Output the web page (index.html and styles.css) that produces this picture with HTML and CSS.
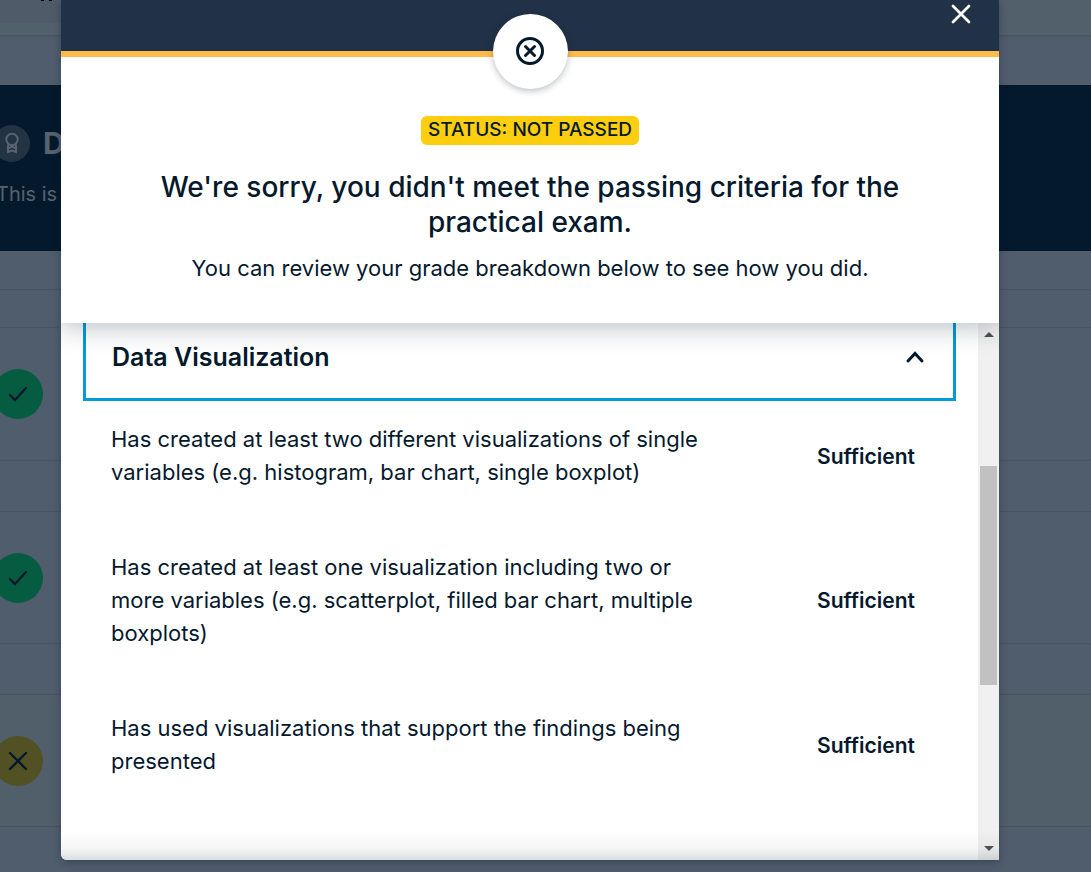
FILE: index.html
```html
<!DOCTYPE html>
<html lang="en">
<head>
<meta charset="utf-8">
<meta name="viewport" content="width=device-width, initial-scale=1">
<title>Practical exam result</title>
<link rel="stylesheet" href="styles.css">
</head>
<body>
<div class="screen">
  <div class="page" aria-hidden="true">
    <div class="topbar"><span class="topbar-tab"><svg width="12" height="1" viewBox="0 0 12 1"><path d="M0 0h3v1H0zM8 0h3v1H8z"/></svg></span></div>
    <div class="spacer"></div>
    <div class="hero">
      <div class="hero-title">
        <span class="medal">
          <svg width="16" height="22" viewBox="0 0 16 22" fill="none" stroke="currentColor" stroke-width="2"><circle cx="8" cy="7.500" r="5.700"/><path d="M4 12.500V20l4-1.500 4 1.500v-7.500M4 16.500l4-2 4 2"/></svg>
        </span>
        <span class="hero-name">D</span>
      </div>
      <p class="hero-text">This is</p>
    </div>
    <div class="line-row gap-row"></div>
    <div class="line-row short-row"></div>
    <div class="line-row status-row"><span class="mark pass"><svg width="20" height="20" viewBox="0 0 20 20"><path d="M2 11l5 5L18 4"/></svg></span></div>
    <div class="line-row mid-row"></div>
    <div class="line-row status-row"><span class="mark pass"><svg width="20" height="20" viewBox="0 0 20 20"><path d="M2 11l5 5L18 4"/></svg></span></div>
    <div class="line-row mid-row"></div>
    <div class="line-row status-row tinted"><span class="mark fail"><svg width="20" height="20" viewBox="0 0 20 20"><path d="M2 2l16 16M18 2L2 18"/></svg></span></div>
  </div>

  <div class="layer">
    <div class="modal" role="dialog" aria-modal="true" aria-labelledby="result-title">
      <header class="modal-head">
        <div class="band">
          <button class="close" type="button" aria-label="Close"><svg width="20" height="20" viewBox="0 0 20 20" fill="none" stroke="currentColor" stroke-width="2.700" stroke-linecap="round"><path d="M2 2l16 16M18 2L2 18"/></svg></button>
          <span class="emblem"><svg width="28" height="28" viewBox="0 0 28 28" fill="none" stroke="currentColor" stroke-width="3" stroke-linecap="round"><circle cx="14" cy="14" r="12.500"/><path d="M9.500 9.500l9 9M18.500 9.500l-9 9"/></svg></span>
        </div>
        <div class="summary">
          <span class="badge">STATUS: NOT PASSED</span>
          <h1 class="title" id="result-title">We're sorry, you didn't meet the passing criteria for the<br>practical exam.</h1>
          <p class="lead">You can review your grade breakdown below to see how you did.</p>
        </div>
      </header>
      <div class="modal-body">
        <div class="content">
          <button class="toggle" type="button" aria-expanded="true" aria-controls="criteria">
            <span>Data Visualization</span>
            <svg width="20" height="14" viewBox="0 0 20 14" fill="none" stroke="currentColor" stroke-width="3" stroke-linecap="round"><path d="M3 11l7-7.500L17 11"/></svg>
          </button>
          <ul class="criteria" id="criteria">
            <li class="criterion"><p class="criterion-text">Has created at least two different visualizations of single<br>variables (e.g. histogram, bar chart, single boxplot)</p><strong class="grade">Sufficient</strong></li>
            <li class="criterion"><p class="criterion-text">Has created at least one visualization including two or<br>more variables (e.g. scatterplot, filled bar chart, multiple<br>boxplots)</p><strong class="grade">Sufficient</strong></li>
            <li class="criterion"><p class="criterion-text">Has used visualizations that support the findings being<br>presented</p><strong class="grade">Sufficient</strong></li>
          </ul>
        </div>
        <div class="scrollbar" aria-hidden="true">
          <svg width="10" height="5" viewBox="0 0 10 5"><path d="M0 5l5-5 5 5z"/></svg>
          <div class="track"><div class="thumb"></div></div>
          <svg width="10" height="5" viewBox="0 0 10 5"><path d="M0 0l5 5 5-5z"/></svg>
        </div>
      </div>
    </div>
  </div>
</div>
</body>
</html>
```
FILE: styles.css
```css
* { box-sizing: border-box; }
body { margin: 0; background: #505d6d; color: #05192d; font-family: Inter, "Liberation Sans", sans-serif; font-size: 22px; }
p, h1, ul { margin: 0; padding: 0; }
button { border: 0; background: none; padding: 0; font: inherit; color: inherit; cursor: pointer; }
svg { display: block; flex: none; }

.screen { display: grid; min-height: 100vh; overflow: hidden; }
.page, .layer { grid-area: 1 / 1; min-width: 0; }

.topbar { height: 35px; background: #52606b; box-shadow: 0 1px 2px #44515f; }
.topbar-tab { display: block; width: 61px; height: 23px; padding-left: 41px; background: #505b6a; }
.spacer { height: 50px; }
.hero { height: 166px; padding-top: 39px; background: #05192d; color: #56636f; }
.hero-title { display: flex; align-items: center; gap: 13px; margin-left: -7px; height: 38px; }
.medal { display: flex; align-items: center; justify-content: center; width: 37px; height: 37px; border-radius: 50%; background: #233344; }
.medal svg { margin-left: 1px; }
.hero-name { font-size: 30px; font-weight: 700; }
.hero-text { margin: 16px 0 0 -4px; line-height: 32px; font-size: 20px; white-space: nowrap; }
.line-row { display: flex; align-items: center; border-bottom: 1px solid #465463; }
.gap-row { height: 39px; }
.short-row { height: 38px; }
.mid-row { height: 51px; }
.status-row { height: 133px; }
.mid-row + .status-row { height: 132px; }
.tinted { background: #515f6b; }
.mark { display: flex; align-items: center; justify-content: center; width: 50px; height: 50px; margin-left: -7px; border-radius: 50%; }
.mark svg { fill: none; stroke: #05192d; stroke-width: 2.400; stroke-linecap: round; }
.pass { background: #055c41; }
.fail { background: #525123; }

.layer { display: flex; padding: 0 92px 12px 61px; }
.modal { display: flex; flex-direction: column; flex: 1; min-width: 0; background: #fff; border-radius: 0 0 0 6px; box-shadow: 0 2px 8px rgba(5, 25, 45, .35); }
.modal-head { position: relative; background: #fff; box-shadow: 0 3px 26px rgba(5, 25, 45, .3); clip-path: inset(0 0 -40px 0); }
.band { position: relative; height: 57px; background: #213147; border-bottom: 6px solid #ffbc4b; }
.close { position: absolute; top: 4px; right: 28px; color: #fff; }
.emblem { position: absolute; top: 14px; left: 50%; margin-left: -37px; padding: 0 1px 1px 0; display: flex; align-items: center; justify-content: center; width: 75px; height: 75px; border-radius: 50%; background: #fff; box-shadow: 0 2px 7px rgba(5, 25, 45, .28); }
.summary { display: flex; flex-direction: column; align-items: center; padding: 59px 24px 38px; text-align: center; }
.badge { padding: 0 7px 1px; border-radius: 6px; background: #fcce0d; line-height: 28px; font-size: 19px; font-weight: 500; }
.title { margin-top: 25px; font-size: 28px; line-height: 35px; font-weight: 500; }
.lead { margin-top: 12px; line-height: 33px; font-size: 22px; }

.modal-body { display: flex; flex: 1; background: linear-gradient(to top, rgba(5, 25, 45, .15), rgba(5, 25, 45, .04) 12px, transparent 30px), #fff; border-radius: inherit; }
.content { flex: 1; min-width: 0; padding: 0 22px; }
.toggle { display: flex; justify-content: space-between; align-items: center; width: 100%; height: 78px; padding: 0 28px 8px 26px; border: 3px solid #009bd8; border-top: 0; text-align: left; font-size: 25px; font-weight: 600; }
.criteria { display: flex; flex-direction: column; gap: 62px; padding: 22px 41px 60px 28px; list-style: none; }
.criterion { display: flex; align-items: center; justify-content: space-between; gap: 24px; }
.criterion-text { line-height: 33px; }
.grade { font-size: 21px; font-weight: 600; }
.scrollbar { display: flex; flex-direction: column; align-items: center; width: 21px; padding: 9px 2px; background: rgba(128, 128, 128, .12); }
.scrollbar svg { fill: #505050; }
.track { flex: 1; width: 100%; padding: 129px 0 0; }
.thumb { height: 219px; background: #c1c1c1; }
```
